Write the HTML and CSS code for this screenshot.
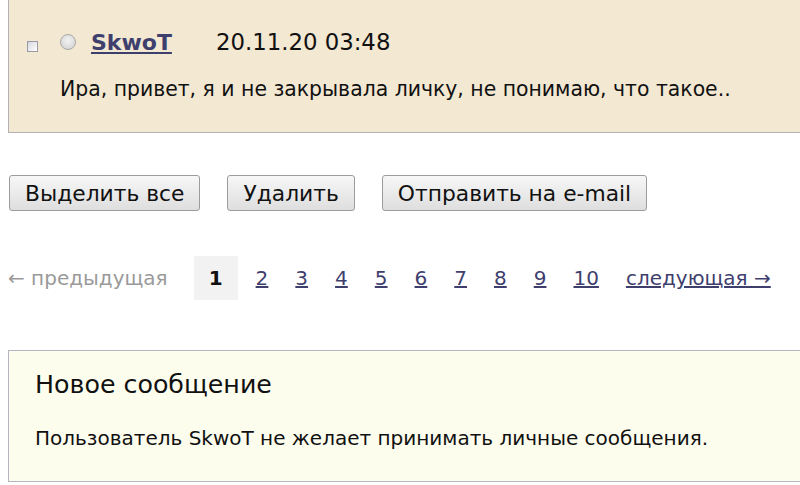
FILE: index.html
```html
<!DOCTYPE html>
<html lang="ru">
  <head>
    <meta charset="UTF-8" />
    <meta name="viewport" content="width=device-width, initial-scale=1.0" />
    <title>Личные сообщения</title>
    <link rel="stylesheet" href="styles.css">
  </head>
  <body>
    <!-- Сообщение -->
    <div class="message">
      <div class="message-check">
        <span class="checkbox"></span>
      </div>
      <div class="message-body">
        <div class="message-head">
          <span class="status"></span>
          <a href="#" class="author">SkwoT</a>
          <span class="date">20.11.20 03:48</span>
        </div>
        <p class="message-text">Ира, привет, я и не закрывала личку, не понимаю, что такое..</p>
      </div>
    </div>

    <!-- Кнопки -->
    <div class="actions">
      <button class="btn">Выделить все</button>
      <button class="btn">Удалить</button>
      <button class="btn">Отправить на e-mail</button>
    </div>

    <!-- Страницы -->
    <div class="pages">
      <span class="page-prev">&larr; предыдущая</span>
      <span class="page-current">1</span>
      <a href="#" class="page">2</a>
      <a href="#" class="page">3</a>
      <a href="#" class="page">4</a>
      <a href="#" class="page">5</a>
      <a href="#" class="page">6</a>
      <a href="#" class="page">7</a>
      <a href="#" class="page">8</a>
      <a href="#" class="page">9</a>
      <a href="#" class="page">10</a>
      <a href="#" class="page">следующая &rarr;</a>
    </div>

    <!-- Новое сообщение -->
    <div class="new-message">
      <h2>Новое сообщение</h2>
      <p>Пользователь SkwoT не желает принимать личные сообщения.</p>
    </div>
  </body>
</html>
```

FILE: styles.css
```css
body {
  font-family: "DejaVu Sans", Verdana, sans-serif;
  margin: 0;
  background-color: white;
  color: #111;
  overflow: hidden;
}

.message {
  display: flex;
  margin-left: 8px;
  height: 133px;
  box-sizing: border-box;
  background-color: #f3e8d2;
  border-left: 1px solid #b4b2b8;
  border-bottom: 1px solid #b4b2b8;
}
.message-check {
  width: 51px;
  padding: 41px 0 0 18px;
  box-sizing: border-box;
}
.checkbox {
  display: block;
  width: 9px;
  height: 9px;
  border: 1px solid #9a9aa6;
  background: linear-gradient(135deg, #d8d8e0, #ffffff);
}
.message-body {
  padding-top: 29px;
}
.message-head {
  display: flex;
  align-items: center;
  font-size: 22px;
}
.status {
  width: 14px;
  height: 14px;
  border-radius: 50%;
  border: 1px solid #a8a8a8;
  background: radial-gradient(circle at 50% 40%, #f2f2f2, #cfcfcf);
  margin-right: 15px;
}
.author {
  color: #3f3f6e;
  font-weight: bold;
  margin-right: 44px;
}
.date {
  font-size: 22.8px;
}
.message-text {
  margin: 22px 0 0;
  font-size: 20.4px;
}

.actions {
  display: flex;
  gap: 27px;
  margin: 42px 0 0 9px;
}
.btn {
  font-family: inherit;
  font-size: 21.8px;
  color: #111;
  height: 36px;
  padding: 0 15px;
  background: linear-gradient(#f7f7f7, #dedede);
  border: 1px solid #9c9c9c;
  border-radius: 3px;
}

.pages {
  display: flex;
  align-items: center;
  gap: 27px;
  margin: 45px 0 0 8px;
  font-size: 20px;
  white-space: nowrap;
}
.page-prev {
  color: #9a9a9a;
}
.page-current {
  width: 44px;
  height: 44px;
  line-height: 44px;
  text-align: center;
  font-weight: bold;
  background-color: #f2f2f2;
  margin-left: -1px;
  margin-right: -9px;
}
.page {
  color: #3f3f6e;
}

.new-message {
  margin: 50px 0 0 8px;
  height: 132px;
  box-sizing: border-box;
  padding: 19px 0 0 26px;
  background-color: #fdfdee;
  border: 1px solid #b4b4c4;
  border-right: none;
}
.new-message h2 {
  margin: 0;
  font-size: 25.3px;
  font-weight: normal;
}
.new-message p {
  margin: 27px 0 0;
  font-size: 20px;
}
```
